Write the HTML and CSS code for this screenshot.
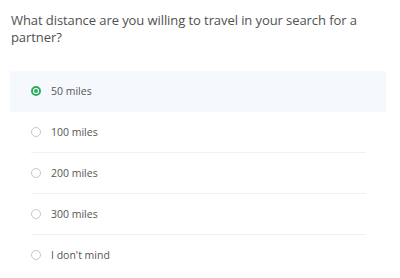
FILE: index.html
```html
<!DOCTYPE html>
<html>
<head>
<meta charset="utf-8">
<link rel="stylesheet" href="styles.css">
</head>
<body>
<div class="question">What distance are you willing to travel in your search for a partner?</div>
<div class="options">
  <div class="option selected"><div class="option-inner"><span class="radio"></span><span class="label">50 miles</span></div></div>
  <div class="option"><div class="option-inner"><span class="radio"></span><span class="label">100 miles</span></div></div>
  <div class="option"><div class="option-inner"><span class="radio"></span><span class="label">200 miles</span></div></div>
  <div class="option"><div class="option-inner"><span class="radio"></span><span class="label">300 miles</span></div></div>
  <div class="option last"><div class="option-inner"><span class="radio"></span><span class="label">I don't mind</span></div></div>
</div>
</body>
</html>
```
FILE: styles.css
```css
html, body {
  margin: 0;
  padding: 0;
  background: #fff;
}
body {
  font-family: "Open Sans", "Liberation Sans", sans-serif;
  color: #555;
}
.question {
  padding: 12px 30px 0 11px;
  font-size: 13px;
  letter-spacing: -0.08px;
  line-height: 17px;
  color: #505050;
}
.options {
  margin: 25px 14px 0 10px;
}
.option {
  padding: 0 20px 0 21px;
}
.option.selected {
  background: #f5f9fd;
}
.option-inner {
  height: 40px;
  border-bottom: 1px solid #f0f0f0;
  display: flex;
  align-items: center;
  gap: 10px;
}
.option.selected .option-inner,
.option.last .option-inner {
  border-bottom-color: transparent;
}
.radio {
  width: 10px;
  height: 10px;
  box-sizing: border-box;
  border: 1px solid #c8c8c8;
  border-radius: 50%;
  background: #fff;
  flex: none;
  position: relative;
}
.selected .radio {
  border: 2px solid #2eab5f;
}
.selected .radio::after {
  content: "";
  position: absolute;
  left: 1px;
  top: 1px;
  width: 4px;
  height: 4px;
  border-radius: 50%;
  background: #2eab5f;
}
.label {
  font-size: 10.5px;
  color: #555;
}
```
